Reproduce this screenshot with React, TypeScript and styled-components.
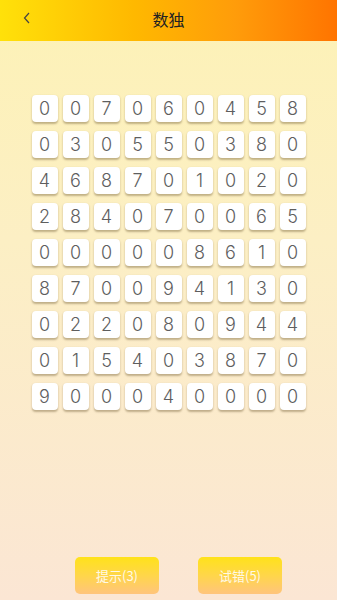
import React from "react";
import styled, { createGlobalStyle } from "styled-components";

const Global = createGlobalStyle`
  html, body { margin: 0; padding: 0; }
  body { font-family: "Noto Sans", "Noto Sans CJK SC", sans-serif; }
`;

const Page = styled.div`
  width: 337px;
  height: 600px;
  display: flex;
  flex-direction: column;
  background: linear-gradient(180deg, #fdf2b6 0%, #fcefc4 40%, #fbe6d4 100%);
  overflow: hidden;
`;

const Header = styled.header`
  height: 41px;
  flex: none;
  position: relative;
  display: flex;
  align-items: center;
  justify-content: center;
  background: linear-gradient(90deg, #ffe10a 0%, #ffb800 40%, #ff9c0a 70%, #ff7400 100%);
`;

const Back = styled.div`
  position: absolute;
  left: 22px;
  top: 11px;
  width: 10px;
  height: 14px;
  display: flex;
`;

const Title = styled.h1`
  margin: 0;
  font-size: 16px;
  font-weight: 400;
  color: #222;
  font-family: "Noto Sans CJK SC", sans-serif;
  transform: translateY(-2px);
`;

const Board = styled.div`
  margin: 54px auto 0;
  display: grid;
  grid-template-columns: repeat(9, 26px);
  grid-auto-rows: 27px;
  column-gap: 5px;
  row-gap: 9px;
`;

const Cell = styled.div`
  background: #fff;
  border-radius: 4px;
  box-shadow: 0 1.5px 2px rgba(120, 100, 60, 0.45);
  display: flex;
  align-items: center;
  justify-content: center;
  font-family: "Inter", "Noto Sans", sans-serif;
  font-weight: 300;
  font-size: 18px;
  color: #5e5e5e;
`;

const Spacer = styled.div`
  flex: 1;
`;

const Actions = styled.div`
  display: flex;
  justify-content: space-between;
  padding: 0 55px 6px 75px;
`;

const ActionButton = styled.button`
  width: 84px;
  height: 37px;
  border: none;
  border-radius: 5px;
  background: linear-gradient(180deg, #ffe21a 0%, #ffd64a 50%, #ffc47c 100%);
  color: #fff9e6;
  font-size: 13px;
  font-family: "Noto Sans CJK SC", sans-serif;
  padding: 0;
`;

const board = [
  "007060458",
  "030550380",
  "468701020",
  "284070065",
  "000008610",
  "870094130",
  "022080944",
  "015403870",
  "900040000",
];

export default function App() {
  return (
    <Page>
      <Global />
      <Header>
        <Back>
          <svg width="10" height="14" viewBox="0 0 10 14">
            <path d="M7 2 L2.5 7 L7 12" fill="none" stroke="#444" strokeWidth="1.2" />
          </svg>
        </Back>
        <Title>数独</Title>
      </Header>
      <Board>
        {board.flatMap((row, r) =>
          row.split("").map((d, c) => <Cell key={`${r}-${c}`}>{d}</Cell>)
        )}
      </Board>
      <Spacer />
      <Actions>
        <ActionButton>提示(3)</ActionButton>
        <ActionButton>试错(5)</ActionButton>
      </Actions>
    </Page>
  );
}
